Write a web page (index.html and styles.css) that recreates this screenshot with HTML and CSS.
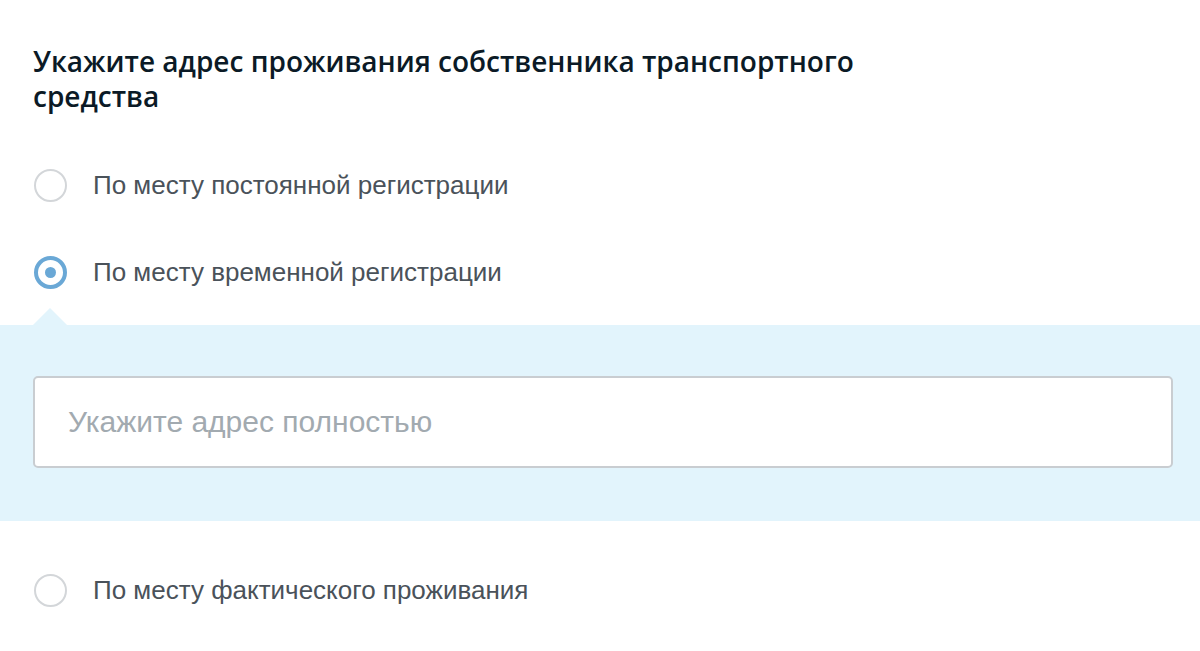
FILE: index.html
```html
<!DOCTYPE html>
<html lang="ru">
<head>
<meta charset="utf-8">
<link rel="stylesheet" href="styles.css">
</head>
<body>
<div class="page">
  <h1 class="title">Укажите адрес проживания собственника транспортного средства</h1>
  <div class="options">
    <label class="option">
      <span class="radio"></span>
      <span class="label">По месту постоянной регистрации</span>
    </label>
    <label class="option option-selected">
      <span class="radio radio-checked"></span>
      <span class="label">По месту временной регистрации</span>
    </label>
    <div class="panel">
      <div class="input">Укажите адрес полностью</div>
    </div>
    <label class="option option-last">
      <span class="radio"></span>
      <span class="label">По месту фактического проживания</span>
    </label>
  </div>
</div>
</body>
</html>
```

FILE: styles.css
```css
html, body {
  margin: 0;
  padding: 0;
  background: #ffffff;
}

.page {
  width: 1200px;
  height: 651px;
  overflow: hidden;
}

.title {
  margin: 0;
  padding: 44px 0 0 33px;
  max-width: 860px;
  font-family: "Open Sans", "DejaVu Sans", sans-serif;
  font-weight: 600;
  font-size: 28px;
  line-height: 35px;
  color: #0b1a26;
}

.options {
  display: flex;
  flex-direction: column;
  margin-top: 54px;
}

.option {
  display: flex;
  align-items: center;
  gap: 26px;
  padding-left: 34px;
  height: 34px;
}

.option-selected {
  margin-top: 53px;
}

.option-last {
  margin-top: 52px;
}

.radio {
  box-sizing: border-box;
  width: 33px;
  height: 33px;
  border-radius: 50%;
  border: 2px solid #d3d6d9;
  background: #ffffff;
  flex: none;
  display: flex;
  align-items: center;
  justify-content: center;
}

.radio-checked {
  border: 4px solid #6aa8d6;
}

.radio-checked::after {
  content: "";
  width: 11px;
  height: 11px;
  border-radius: 50%;
  background: #6aa8d6;
}

.label {
  font-family: "Liberation Sans", Arial, sans-serif;
  font-size: 26px;
  color: #4a525a;
}

.panel {
  position: relative;
  margin-top: 36px;
  background: #e2f4fc;
  padding: 51px 27px 53px 33px;
}

.panel::before {
  content: "";
  position: absolute;
  left: 33px;
  top: -17px;
  border-left: 17px solid transparent;
  border-right: 17px solid transparent;
  border-bottom: 17px solid #e2f4fc;
}

.input {
  box-sizing: border-box;
  height: 92px;
  background: #ffffff;
  border: 2px solid #c9cdd1;
  border-radius: 5px;
  padding-left: 33px;
  display: flex;
  align-items: center;
  font-family: "Liberation Sans", Arial, sans-serif;
  font-size: 30px;
  color: #a2aab0;
}
```
